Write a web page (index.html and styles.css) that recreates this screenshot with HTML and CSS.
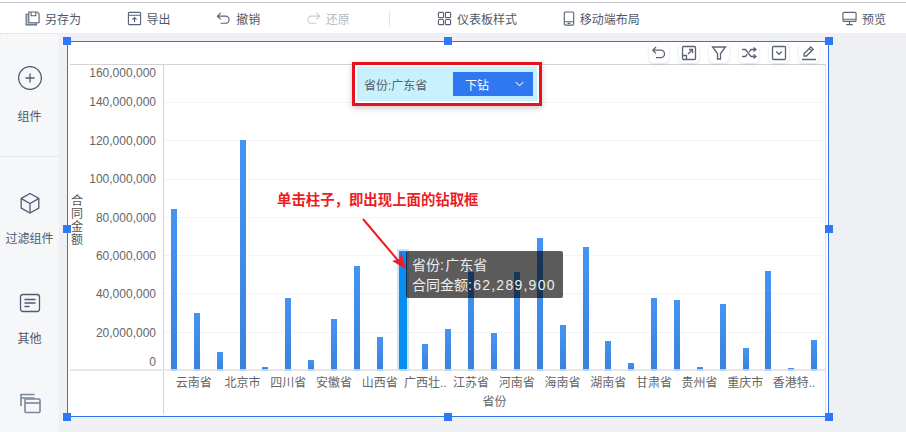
FILE: index.html
```html
<!DOCTYPE html>
<html lang="zh-CN">
<head>
<meta charset="utf-8">
<title>仪表板</title>
<link rel="stylesheet" href="styles.css">
</head>
<body>
<header class="topbar">
  <div class="act"><svg class="ico" viewBox="0 0 16 16"><path d="M4 3.5H1.2v11.3h11V12.3" fill="#c9ced8"/><path d="M4 1h8.8L15 3v9.5H4z" fill="#fff"/><path d="M6.5 1v4h5V1"/></svg>另存为</div>
  <div class="act"><svg class="ico" viewBox="0 0 16 16"><rect x="1.5" y="1.5" width="13" height="13" rx="1"/><path d="M1.5 4.5h13M8 12V7M5.8 9.2 8 7l2.2 2.2"/></svg>导出</div>
  <div class="act"><svg class="ico" viewBox="0 0 16 16"><path d="M5 2 1.5 5.5 5 9M2 5.5h8.2a3.8 3.8 0 0 1 0 7.6H5"/></svg>撤销</div>
  <div class="act off"><svg class="ico" viewBox="0 0 16 16"><path d="M11 2l3.5 3.5L11 9M14 5.5H5.8a3.8 3.8 0 0 0 0 7.6H11"/></svg>还原</div>
  <span class="divider"></span>
  <div class="act"><svg class="ico" viewBox="0 0 16 16"><rect x="1.5" y="1.5" width="5.5" height="5.5" rx="1"/><rect x="9" y="1.5" width="5.5" height="5.5" rx="1"/><rect x="1.5" y="9" width="5.5" height="5.5" rx="1"/><rect x="9" y="9" width="5.5" height="5.5" rx="1"/></svg>仪表板样式</div>
  <div class="act"><svg class="ico ico-phone" viewBox="0 0 12 16"><rect x="1" y="1" width="10" height="14" rx="1.2"/><path d="M1 11.5h10M4.5 13.2h3"/></svg>移动端布局</div>
  <div class="act act-end"><svg class="ico" viewBox="0 0 16 16"><rect x="1" y="1.5" width="14" height="9.5" rx="1"/><path d="M1 8.8h14M8 11v3M4.5 14.5h7"/></svg>预览</div>
</header>

<div class="body-row">
  <aside class="sidebar">
    <div class="tool tool-first">
      <svg class="tool-ico" viewBox="0 0 24 24"><circle cx="12" cy="12" r="11.4"/><path d="M12 7.5v9M7.5 12h9"/></svg>
      <span>组件</span>
    </div>
    <div class="tool">
      <svg class="tool-ico" viewBox="0 0 24 24"><path d="M12 2.5l8.8 5v9.6L12 22l-8.8-4.9V7.5zM3.4 7.6 12 12.5l8.6-4.9M12 12.5V22"/></svg>
      <span>过滤组件</span>
    </div>
    <div class="tool">
      <svg class="tool-ico" viewBox="0 0 24 24"><rect x="2.5" y="3.5" width="19" height="17" rx="2.5"/><path d="M6.5 8.5h11M6.5 12h11M6.5 15.5h5"/></svg>
      <span>其他</span>
    </div>
    <div class="tool">
      <svg class="tool-ico tool-ico-soft" viewBox="0 0 24 24"><path d="M3 15V3.5h13.5M3 7h13.5"/><rect x="7" y="8" width="15" height="13.5" rx="1"/><path d="M7 12h15"/></svg>
    </div>
  </aside>

  <main class="canvas">
    <section class="widget">
      <div class="chart">
        <div class="chart-top">
          <div class="yaxis">
            <div class="ytitle">合同金额</div>
            <div class="ticks">
              <div class="tick tick-first">160,000,000</div>
              <div class="tick tick-second">140,000,000</div>
              <div class="tick">120,000,000</div>
              <div class="tick">100,000,000</div>
              <div class="tick">80,000,000</div>
              <div class="tick">60,000,000</div>
              <div class="tick">40,000,000</div>
              <div class="tick">20,000,000</div>
              <div class="tick tick-last">0</div>
            </div>
          </div>
          <div class="plot">
            <div class="grid">
              <div class="gridline"></div><div class="gridline"></div><div class="gridline"></div><div class="gridline"></div><div class="gridline"></div><div class="gridline"></div><div class="gridline"></div>
            </div>
            <div class="bars">
              <div class="slot"><div class="bar" style="height:160px"></div></div>
              <div class="slot"><div class="bar" style="height:56px"></div></div>
              <div class="slot"><div class="bar" style="height:17px"></div></div>
              <div class="slot"><div class="bar" style="height:229px"></div></div>
              <div class="slot"><div class="bar" style="height:2px"></div></div>
              <div class="slot"><div class="bar" style="height:71px"></div></div>
              <div class="slot"><div class="bar" style="height:9px"></div></div>
              <div class="slot"><div class="bar" style="height:50px"></div></div>
              <div class="slot"><div class="bar" style="height:103px"></div></div>
              <div class="slot"><div class="bar" style="height:32px"></div></div>
              <div class="slot"><div class="bar bar-on" style="height:118px"></div></div>
              <div class="slot"><div class="bar" style="height:25px"></div></div>
              <div class="slot"><div class="bar" style="height:40px"></div></div>
              <div class="slot"><div class="bar" style="height:97px"></div></div>
              <div class="slot"><div class="bar" style="height:36px"></div></div>
              <div class="slot"><div class="bar" style="height:97px"></div></div>
              <div class="slot"><div class="bar" style="height:131px"></div></div>
              <div class="slot"><div class="bar" style="height:44px"></div></div>
              <div class="slot"><div class="bar" style="height:122px"></div></div>
              <div class="slot"><div class="bar" style="height:28px"></div></div>
              <div class="slot"><div class="bar" style="height:6px"></div></div>
              <div class="slot"><div class="bar" style="height:71px"></div></div>
              <div class="slot"><div class="bar" style="height:69px"></div></div>
              <div class="slot"><div class="bar" style="height:2px"></div></div>
              <div class="slot"><div class="bar" style="height:65px"></div></div>
              <div class="slot"><div class="bar" style="height:21px"></div></div>
              <div class="slot"><div class="bar" style="height:98px"></div></div>
              <div class="slot"><div class="bar" style="height:1px"></div></div>
              <div class="slot"><div class="bar" style="height:29px"></div></div>
            </div>
          </div>
        </div>
        <div class="chart-bottom">
          <div class="x-spacer"></div>
          <div class="xaxis">
            <div class="xlabels">
              <span class="xl-first">云南省</span><span>北京市</span><span>四川省</span><span>安徽省</span><span>山西省</span><span>广西壮..</span><span>江苏省</span><span>河南省</span><span>海南省</span><span>湖南省</span><span>甘肃省</span><span>贵州省</span><span>重庆市</span><span class="xl-last">香港特..</span>
            </div>
            <div class="xtitle">省份</div>
          </div>
        </div>
      </div>

      <div class="mini-tools">
        <button class="mini"><svg viewBox="0 0 16 16"><path d="M5 2 1.8 5.2 5 8.4M2.2 5.2h7.6a3.7 3.7 0 0 1 0 7.4H5"/></svg></button>
        <button class="mini"><svg viewBox="0 0 16 16"><rect x="1.5" y="1.5" width="13" height="13" rx="1"/><path d="M7 9l4.5-4.5M8 4.5h3.5V8M1.5 10.5h4v4"/></svg></button>
        <button class="mini"><svg viewBox="0 0 16 16"><path d="M1.5 2h13L9.5 8.5V14h-3V8.5z"/></svg></button>
        <button class="mini"><svg viewBox="0 0 16 16"><path d="M1 4.5h3.5l5.5 7h4.5M1 11.5h3.5l1.8-2.3M8.3 6.8 10 4.5h4.5M12.5 2.5l2.5 2-2.5 2M12.5 9.5l2.5 2-2.5 2"/></svg></button>
        <button class="mini"><svg viewBox="0 0 16 16"><rect x="1.5" y="1.5" width="13" height="13" rx="1"/><path d="M5.2 6.5 8 9.3l2.8-2.8"/></svg></button>
        <button class="mini"><svg viewBox="0 0 16 16"><path d="M3 11V8.8L9.8 2l2.4 2.4L5.4 11zM8.3 3.5l2.4 2.4M1 14.5h14"/></svg></button>
      </div>

      <div class="drill">
        <div class="drill-inner">
          <span class="drill-label">省份:广东省</span>
          <div class="drill-btn"><span>下钻</span><svg class="chev" viewBox="0 0 10 6"><path d="M.8.8 5 4.8 9.2.8"/></svg></div>
        </div>
      </div>

      <div class="note">单击柱子，即出现上面的钻取框</div>

      <div class="tip">
        <div>省份<span class="tip-num">:</span>广东省</div>
        <div>合同金额<span class="tip-num">:62,289,900</span></div>
      </div>

      <svg class="arrow" viewBox="0 0 50 56"><path d="M2 2 40 47" class="arrow-line"/><path d="M45 52 31 44l8-2 1-8z" class="arrow-head"/></svg>

      <i class="handle h-tl"></i><i class="handle h-tm"></i><i class="handle h-tr"></i>
      <i class="handle h-ml"></i><i class="handle h-mr"></i>
      <i class="handle h-bl"></i><i class="handle h-bm"></i><i class="handle h-br"></i>
    </section>
  </main>
</div>
</body>
</html>
```

FILE: styles.css
```css
* { box-sizing: border-box; }
html, body { margin: 0; padding: 0; }
body {
  width: 906px;
  height: 432px;
  overflow: hidden;
  background: #eff0f4;
  font-family: "Liberation Sans", "Noto Sans CJK SC", sans-serif;
  font-size: 12px;
  color: #4e586c;
}

/* top toolbar */
.topbar {
  height: 33px;
  display: flex;
  align-items: center;
  gap: 45.6px;
  padding: 1px 20px 0 25px;
  background: #fff;
  border-top: 2px solid #fff;
  position: relative;
}
.topbar::before {
  content: "";
  position: absolute;
  left: 0;
  right: 0;
  top: 0;
  height: 1px;
  background: #c4c6ca;
}
.act {
  display: flex;
  align-items: center;
  gap: 5px;
  white-space: nowrap;
}
.act.off { color: #b4b9c2; }
.act.off .ico { stroke: #c8ccd3; }
.act-end { margin-left: auto; }
.ico {
  width: 15px;
  height: 15px;
  fill: none;
  stroke: #596377;
  stroke-width: 1.2;
  flex: none;
}
.ico-phone { width: 12px; }
.divider {
  width: 1px;
  height: 15px;
  background: #e3e4e7;
  margin: 0 1.4px 0 -6.4px;
}

/* layout */
.body-row { display: flex; height: 399px; }

/* left rail */
.sidebar {
  width: 60px;
  flex: none;
  background: #f6f7f8;
  border-right: 1px solid #eceef1;
  border-top: 1px dotted #d9dadd;
  overflow: hidden;
}
.tool {
  height: 100px;
  padding-top: 34px;
  display: flex;
  flex-direction: column;
  align-items: center;
  gap: 16px;
  line-height: 16px;
  white-space: nowrap;
}
.tool-first {
  height: 123px;
  padding-top: 32px;
  gap: 19px;
  border-bottom: 1px solid #e4e5e8;
}
.tool-ico {
  width: 24px;
  height: 24px;
  fill: none;
  stroke: #4f5b75;
  stroke-width: 1.3;
  flex: none;
}
.tool-ico-soft { stroke: #7c869c; stroke-width: 1.6; }

/* canvas and selected widget */
.canvas { flex: 1; padding: 8px 0 0 7px; }
.widget {
  position: relative;
  width: 762px;
  height: 376px;
  background: #fff;
  border: 1px solid #2f74ee;
  padding: 22px 2px 0 2px;
}
.chart {
  height: 100%;
  border-top: 1px solid #d3d3d3;
  border-right: 1px solid #dcdee2;
  color: #666;
}
.chart-top {
  display: flex;
  height: 304px;
  border-bottom: 2px solid #e6e6e6;
  box-sizing: content-box;
}
.yaxis {
  width: 94px;
  flex: none;
  display: flex;
  border-right: 1px solid #d3d3d3;
}
.ytitle {
  width: 12px;
  margin: 130px 0 0 1px;
  line-height: 13px;
  color: #555;
}
.ticks { flex: 1; padding: 1px 7px 0 0; text-align: right; }
.tick { height: 38.3px; line-height: 38.3px; white-space: nowrap; }
.tick-first { height: 16.8px; line-height: 14px; }
.tick-second { height: 39.3px; }
.tick-last { height: 20px; line-height: 20px; }

.plot { position: relative; flex: 1; }
.grid { position: absolute; inset: 0; padding-top: 37px; }
.gridline { height: 38.3px; border-top: 1px solid #f3f4f5; }
.bars {
  position: relative;
  display: flex;
  align-items: flex-end;
  height: 100%;
  width: 663px;
  margin-left: -1.4px;
}
.slot { flex: 1; display: flex; justify-content: center; align-items: flex-end; height: 100%; }
.bar {
  position: relative;
  width: 6px;
  background: linear-gradient(#4594f2, #3a82dc);
}
.bar::after {
  content: "";
  position: absolute;
  left: 0;
  right: 0;
  top: 100%;
  height: 2px;
  background: #bcd3ee;
}
.bar-on {
  width: 8px;
  background: #0a8df0;
  box-shadow: 0 0 0 2px #cde4fa;
}

.chart-bottom { display: flex; height: 45px; }
.x-spacer { width: 94px; flex: none; height: 43px; border-right: 1px solid #d3d3d3; }
.xaxis { flex: 1; min-width: 0; }
.xlabels { display: flex; padding-left: 10px; height: 24px; line-height: 24px; }
.xlabels span { width: 45.71px; flex: none; text-align: center; white-space: nowrap; }
.xlabels .xl-first { margin: 0 3px 0 -3px; }
.xlabels .xl-last { margin-left: 3px; }
.xtitle { text-align: center; line-height: 14px; }

/* floating mini toolbar */
.mini-tools {
  position: absolute;
  left: 581px;
  top: 1px;
  display: flex;
  gap: 10px;
}
.mini {
  width: 20px;
  height: 20px;
  padding: 2px;
  border: 0;
  border-radius: 5px;
  background: #fff;
  box-shadow: 0 1px 3px rgba(0, 0, 0, .14);
  display: block;
}
.mini svg {
  display: block;
  width: 16px;
  height: 16px;
  fill: none;
  stroke: #5a6375;
  stroke-width: 1.3;
}

/* drill popover */
.drill {
  position: absolute;
  left: 284px;
  top: 20px;
  width: 190px;
  height: 44px;
  border: 3px solid #e8121f;
  padding: 2px;
  background: #fff;
  box-shadow: 0 2px 6px rgba(0, 0, 0, .22);
}
.drill-inner {
  height: 100%;
  background: #c9f1fd;
  display: flex;
  align-items: center;
  justify-content: space-between;
  padding: 0 4px 0 7px;
}
.drill-label { color: #55606f; white-space: nowrap; }
.drill-btn {
  width: 80px;
  height: 24px;
  background: #2f78f2;
  color: #fff;
  display: flex;
  align-items: center;
  justify-content: space-between;
  padding: 0 9px 0 12px;
}
.chev { width: 9px; height: 6px; fill: none; stroke: #dfeaff; stroke-width: 1.2; }

/* annotation */
.note {
  position: absolute;
  left: 209px;
  top: 148px;
  font-size: 14.4px;
  line-height: 20px;
  font-weight: 700;
  color: #ee1c25;
  white-space: nowrap;
}
.tip {
  position: absolute;
  left: 338px;
  top: 209px;
  width: 157px;
  height: 47px;
  padding: 4px 6px;
  border-radius: 2px;
  background: rgba(0, 0, 0, .64);
  color: #eee;
  font-size: 14px;
  line-height: 20px;
  white-space: nowrap;
}
.tip-num { letter-spacing: 1.25px; }
.arrow {
  position: absolute;
  left: 293px;
  top: 175px;
  width: 50px;
  height: 56px;
  overflow: visible;
}
.arrow-line { fill: none; stroke: #ee1c25; stroke-width: 2; }
.arrow-head { fill: #ee1c25; }

/* selection handles */
.handle {
  position: absolute;
  width: 8px;
  height: 8px;
  background: #2f78f8;
}
.h-tl { left: -5px; top: -5px; }
.h-tm { left: 376px; top: -5px; }
.h-tr { right: -5px; top: -5px; }
.h-ml { left: -5px; top: 183px; }
.h-mr { right: -5px; top: 183px; }
.h-bl { left: -5px; bottom: -5px; }
.h-bm { left: 376px; bottom: -5px; }
.h-br { right: -5px; bottom: -5px; }
```
